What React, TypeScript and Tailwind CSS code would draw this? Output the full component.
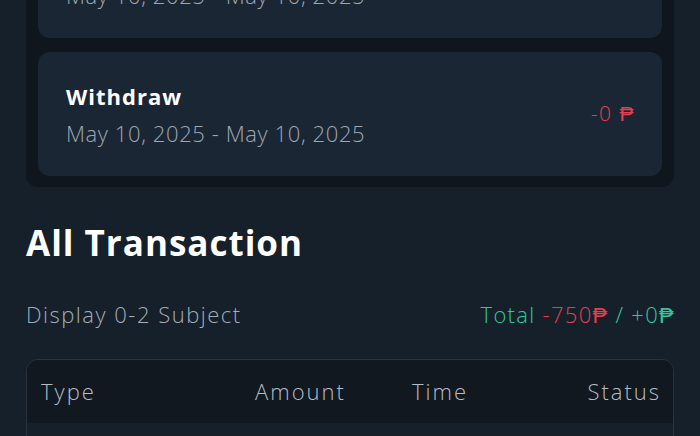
import React from "react";

function Card({ title }: { title: string }) {
  return (
    <div className="h-[124px] rounded-[12px] bg-[#1b2634] pl-[28px] pr-[28px] flex items-center justify-between">
      <div className="flex flex-col">
        <div className="text-[22px] font-bold text-white leading-[28px] tracking-[1px]">{title}</div>
        <div className="text-[22px] font-light text-[#9ca7b3] leading-[28px] mt-[9px] tracking-[0.6px]">May 10, 2025 - May 10, 2025</div>
      </div>
      <div className="text-[21px] text-[#e0404f] font-light tracking-[1.5px] mr-[-1px]">-0 ₱</div>
    </div>
  );
}

export default function App() {
  return (
    <div className="w-[700px] h-[436px] overflow-hidden bg-[#16202a] px-[26px]" style={{ fontFamily: "'Open Sans', sans-serif" }}>
      <div className="mt-[-98px] bg-[#0f161e] rounded-b-[12px] px-[12px] pb-[11px] pt-[12px] flex flex-col gap-[14px]">
        <Card title="Deposit" />
        <Card title="Withdraw" />
      </div>
      <h2 className="mt-[33px] text-[35px] font-bold text-white leading-[46px] tracking-[1px]">All Transaction</h2>
      <div className="mt-[33px] flex items-center justify-between text-[22px] font-light leading-[30px]">
        <span className="text-[#a3adb8] tracking-[1.5px]">Display 0-2 Subject</span>
        <span className="text-[#2cc9a0] tracking-[1.3px] mr-[-1px]">
          Total <span className="text-[#e0404f]">-750₱</span> / +0₱
        </span>
      </div>
      <div className="mt-[30px] rounded-[12px] border border-[#2a3440] overflow-hidden">
        <div className="h-[63px] bg-[#111820] grid grid-cols-[214px_157px_1fr_auto] items-center px-[14px] text-[22px] font-light text-[#b4bdc7] tracking-[2px]">
          <span>Type</span>
          <span>Amount</span>
          <span>Time</span>
          <span className="mr-[-2px]">Status</span>
        </div>
        <div className="h-[40px] bg-[#16202a]" />
      </div>
    </div>
  );
}
